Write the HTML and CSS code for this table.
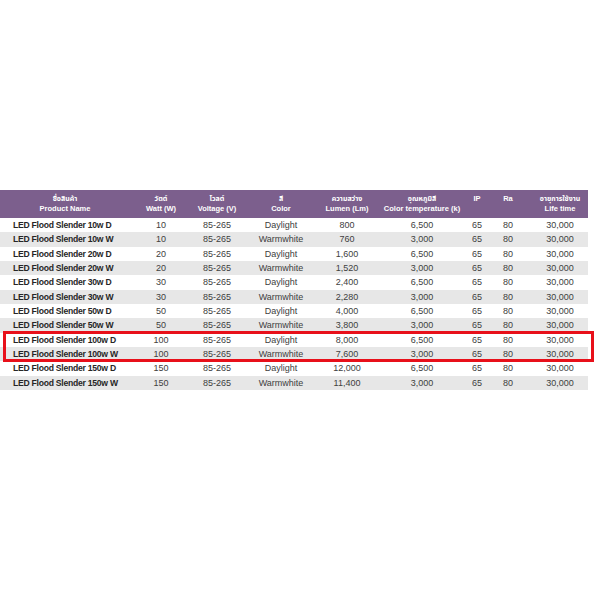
FILE: index.html
```html
<!DOCTYPE html>
<html lang="th">
<head>
<meta charset="utf-8">
<title>LED Flood Slender</title>
<link rel="stylesheet" href="styles.css">
</head>
<body>
<div class="page">
  <div class="spec">
    <div class="row head">
      <div class="cell name"><span class="th">ชื่อสินค้า</span><span class="en">Product Name</span></div>
      <div class="cell"><span class="th">วัตต์</span><span class="en">Watt (W)</span></div>
      <div class="cell"><span class="th">โวลต์</span><span class="en">Voltage (V)</span></div>
      <div class="cell"><span class="th">สี</span><span class="en">Color</span></div>
      <div class="cell"><span class="th">ความสว่าง</span><span class="en">Lumen (Lm)</span></div>
      <div class="cell"><span class="th">อุณหภูมิสี</span><span class="en">Color temperature (k)</span></div>
      <div class="cell"><span class="en">IP</span></div>
      <div class="cell"><span class="en">Ra</span></div>
      <div class="cell"><span class="th">อายุการใช้งาน</span><span class="en">Life time</span></div>
    </div>
    <div class="row"><div class="cell prod">LED Flood Slender 10w D</div><div class="cell">10</div><div class="cell">85-265</div><div class="cell">Daylight</div><div class="cell">800</div><div class="cell">6,500</div><div class="cell">65</div><div class="cell">80</div><div class="cell">30,000</div></div>
    <div class="row alt"><div class="cell prod">LED Flood Slender 10w W</div><div class="cell">10</div><div class="cell">85-265</div><div class="cell">Warmwhite</div><div class="cell">760</div><div class="cell">3,000</div><div class="cell">65</div><div class="cell">80</div><div class="cell">30,000</div></div>
    <div class="row"><div class="cell prod">LED Flood Slender 20w D</div><div class="cell">20</div><div class="cell">85-265</div><div class="cell">Daylight</div><div class="cell">1,600</div><div class="cell">6,500</div><div class="cell">65</div><div class="cell">80</div><div class="cell">30,000</div></div>
    <div class="row alt"><div class="cell prod">LED Flood Slender 20w W</div><div class="cell">20</div><div class="cell">85-265</div><div class="cell">Warmwhite</div><div class="cell">1,520</div><div class="cell">3,000</div><div class="cell">65</div><div class="cell">80</div><div class="cell">30,000</div></div>
    <div class="row"><div class="cell prod">LED Flood Slender 30w D</div><div class="cell">30</div><div class="cell">85-265</div><div class="cell">Daylight</div><div class="cell">2,400</div><div class="cell">6,500</div><div class="cell">65</div><div class="cell">80</div><div class="cell">30,000</div></div>
    <div class="row alt"><div class="cell prod">LED Flood Slender 30w W</div><div class="cell">30</div><div class="cell">85-265</div><div class="cell">Warmwhite</div><div class="cell">2,280</div><div class="cell">3,000</div><div class="cell">65</div><div class="cell">80</div><div class="cell">30,000</div></div>
    <div class="row"><div class="cell prod">LED Flood Slender 50w D</div><div class="cell">50</div><div class="cell">85-265</div><div class="cell">Daylight</div><div class="cell">4,000</div><div class="cell">6,500</div><div class="cell">65</div><div class="cell">80</div><div class="cell">30,000</div></div>
    <div class="row alt"><div class="cell prod">LED Flood Slender 50w W</div><div class="cell">50</div><div class="cell">85-265</div><div class="cell">Warmwhite</div><div class="cell">3,800</div><div class="cell">3,000</div><div class="cell">65</div><div class="cell">80</div><div class="cell">30,000</div></div>
    <div class="row"><div class="cell prod">LED Flood Slender 100w D</div><div class="cell">100</div><div class="cell">85-265</div><div class="cell">Daylight</div><div class="cell">8,000</div><div class="cell">6,500</div><div class="cell">65</div><div class="cell">80</div><div class="cell">30,000</div></div>
    <div class="row alt"><div class="cell prod">LED Flood Slender 100w W</div><div class="cell">100</div><div class="cell">85-265</div><div class="cell">Warmwhite</div><div class="cell">7,600</div><div class="cell">3,000</div><div class="cell">65</div><div class="cell">80</div><div class="cell">30,000</div></div>
    <div class="row"><div class="cell prod">LED Flood Slender 150w D</div><div class="cell">150</div><div class="cell">85-265</div><div class="cell">Daylight</div><div class="cell">12,000</div><div class="cell">6,500</div><div class="cell">65</div><div class="cell">80</div><div class="cell">30,000</div></div>
    <div class="row alt"><div class="cell prod">LED Flood Slender 150w W</div><div class="cell">150</div><div class="cell">85-265</div><div class="cell">Warmwhite</div><div class="cell">11,400</div><div class="cell">3,000</div><div class="cell">65</div><div class="cell">80</div><div class="cell">30,000</div></div>
    <div class="highlight"></div>
  </div>
</div>
</body>
</html>
```
FILE: styles.css
```css
html, body {
  margin: 0;
  padding: 0;
  background: #ffffff;
}

.page {
  padding-top: 190px;
  width: 600px;
}

.spec {
  position: relative;
  width: 588px;
  font-family: "Liberation Sans", Arial, "Noto Sans Thai", "Noto Sans", sans-serif;
  color: #404040;
}

.row {
  display: grid;
  grid-template-columns: 130px 62px 50px 78px 54px 96px 14px 48px 56px;
  height: 14.333px;
  background: #ffffff;
}

.row.alt {
  background: #e7e7e7;
}

.cell {
  display: flex;
  align-items: center;
  justify-content: center;
  white-space: nowrap;
  font-size: 9px;
  line-height: 10px;
}

.cell.prod {
  justify-content: flex-start;
  padding-left: 13px;
  font-weight: bold;
  font-size: 8.6px;
  letter-spacing: -0.25px;
  color: #262626;
}

.row.head {
  height: 28px;
  background: #7c5f8d;
  color: #ffffff;
}

.row.head .cell {
  flex-direction: column;
  justify-content: flex-start;
  align-items: center;
  padding-top: 4px;
}

.th {
  font-size: 7px;
  line-height: 10px;
  font-weight: bold;
}

.en {
  font-size: 7.5px;
  line-height: 10px;
  font-weight: bold;
}

.highlight {
  position: absolute;
  left: 3px;
  top: 141px;
  width: 585px;
  height: 25px;
  border: 3px solid #e8101a;
  pointer-events: none;
}
```
